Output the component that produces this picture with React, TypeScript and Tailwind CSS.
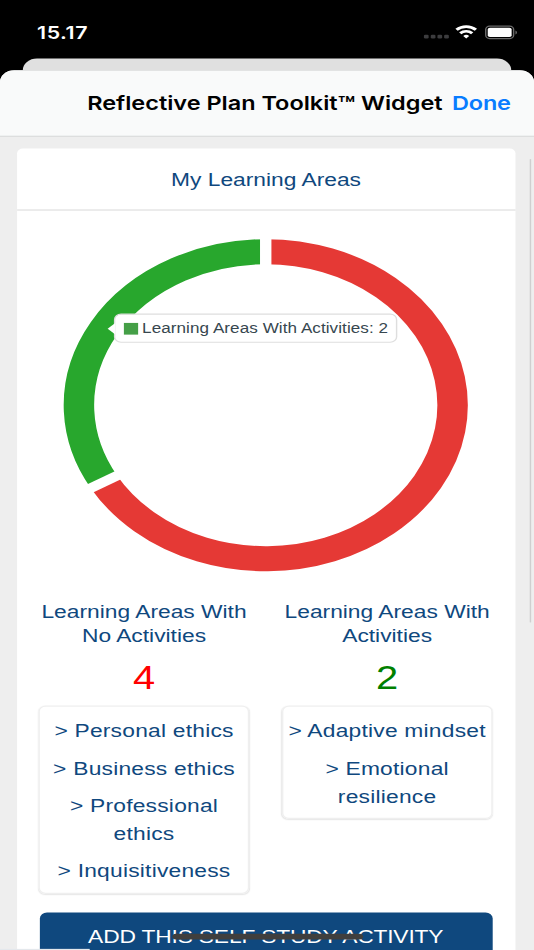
import React from 'react';

interface Area {
    title: string[];
    count: number;
    countClass: string;
    items: string[];
}

const AREAS: Area[] = [
    {
        title: ['Learning Areas With', 'No Activities'],
        count: 4,
        countClass: 'text-[#ff0000]',
        items: ['Personal ethics', 'Business ethics', 'Professional ethics', 'Inquisitiveness'],
    },
    {
        title: ['Learning Areas With', 'Activities'],
        count: 2,
        countClass: 'text-[#008000]',
        items: ['Adaptive mindset', 'Emotional resilience'],
    },
];

const StatusBar: React.FC = () => (
    <div className="flex h-[50.4px] shrink-0 items-start justify-between pl-[26px] pr-[12.3px] pt-[19px] font-['Inter',sans-serif] text-white">
        <span className="text-[15px] font-semibold leading-[18px] tracking-[0.4px]">15.17</span>
        <svg className="mt-[2px] h-[14px] w-[68px]" viewBox="0 0 68 14">
            <g fill="#3c3c3e">
                <rect x="2.7" y="8.6" width="3.3" height="3.3" rx="1" />
                <rect x="7.5" y="8.6" width="3.3" height="3.3" rx="1" />
                <rect x="12.2" y="8.6" width="3.3" height="3.3" rx="1" />
                <rect x="16.9" y="8.6" width="3.3" height="3.3" rx="1" />
            </g>
            <g fill="none" stroke="#fff" strokeWidth="2.3">
                <path d="M25.6 4.4a9.9 9.9 0 0 1 13.6 0" />
                <path d="M28.2 7.4a6.1 6.1 0 0 1 8.4 0" />
            </g>
            <path d="M30.3 9.7a3.1 3.1 0 0 1 4.2 0L32.4 12z" fill="#fff" />
            <rect x="46.1" y="1.4" width="19.6" height="10.6" rx="2.8" fill="none" stroke="#6a6a6a" />
            <rect x="47.5" y="2.8" width="16.8" height="7.8" rx="1.5" fill="#fff" />
            <path d="M67 5v3.4q1-.5 1-1.7T67 5z" fill="#7a7a7a" />
        </svg>
    </div>
);

const Tooltip: React.FC = () => (
    <div className="absolute left-[67.8px] top-[87.9px] flex h-[24.9px] w-[199.4px] items-center rounded-[5px] border border-[#dedede] bg-white pl-[6.2px]">
        <svg className="absolute -left-[5.5px] top-[6.5px] h-[10px] w-[6px]" viewBox="0 0 6 10">
            <path d="M6 0L0.6 5L6 10z" fill="#fff" />
        </svg>
        <span className="h-[10px] w-[10px] bg-[#459f47]" />
        <span className="ml-[2.8px] whitespace-nowrap text-[12px] tracking-[0.04px] text-[#37474f]">
            Learning Areas With Activities: 2
        </span>
    </div>
);

// 2 of 6 areas have activities, so the green arc covers the last 120 degrees
const DonutChart: React.FC = () => (
    <div className="relative h-[335px]">
        <svg className="h-[335px] w-[350px] max-w-none" viewBox="0 -0.7 350 335">
            <g fill="none" strokeWidth="21.4">
                <path d="M174.6 34.4A131.2 131.2 0 1 1 61 231.2" stroke="#e53935" />
                <path d="M61 231.2A131.2 131.2 0 0 1 174.6 34.4" stroke="#28a72d" />
            </g>
            <g stroke="#fff" strokeWidth="8">
                <path d="M174.6 165.6V15" />
                <path d="M174.6 165.6L44.7 240.6" />
            </g>
        </svg>
        <Tooltip />
    </div>
);

const AreaColumn: React.FC<{ area: Area }> = ({ area }) => (
    <div className="flex w-[147.7px] flex-col text-center">
        <h3 className="text-[16px] leading-[21px]">
            {area.title.map((line) => (
                <span key={line} className="block whitespace-nowrap">{line}</span>
            ))}
        </h3>
        <p className={`mt-[9.8px] text-[28px] leading-[32px] ${area.countClass}`}>{area.count}</p>
        <ul className="mt-[7.6px] rounded-[5px] border border-[#efefef] pb-[2.4px] pt-[4.4px] shadow-[0_0.5px_1px_rgba(0,0,0,0.1)]">
            {area.items.map((item) => (
                <li key={item} className="px-[2px] py-[4px] text-[16px] leading-[24px] tracking-[0.16px]">
                    {`> ${item}`}
                </li>
            ))}
        </ul>
    </div>
);

const App: React.FC = () => (
    <div className="h-[950px] w-[534px] overflow-hidden bg-black">
        {/* 375x812 phone screen stretched over the window */}
        <div className="relative flex h-[812px] w-[375px] origin-top-left scale-x-[1.424] scale-y-[1.17] flex-col overflow-hidden bg-black font-['Liberation_Sans',sans-serif] text-[#0f487e]">
            <StatusBar />
            <div className="mx-[16.4px] h-[9.8px] shrink-0 rounded-t-[10px] bg-[#e0e0e0]" />
            <div className="flex min-h-0 flex-1 flex-col overflow-hidden rounded-t-[10px] bg-[#eeeeee]">
                <header className="flex h-[56.6px] shrink-0 items-center justify-end border-b border-[#d9dadb] bg-[#f9fafa] pr-[16.3px] pt-[1.2px] font-['Inter',sans-serif] text-[16.5px] font-semibold">
                    <h1 className="flex items-baseline whitespace-nowrap tracking-[-0.01px] text-black">
                        Reflective Plan Toolkit
                        <span className="relative top-[2.6px] text-[20px] leading-[16px]">™</span>
                        <span className="ml-[3.8px]">Widget</span>
                    </h1>
                    <button className="ml-[6.7px] tracking-[-0.15px] text-[#087cff]">Done</button>
                </header>
                <div className="flex min-h-0 flex-1 pt-[9.8px]">
                    <main className="ml-[12px] flex w-[349.6px] flex-col rounded-t-[4px] bg-white">
                        <h2 className="h-[53.7px] shrink-0 border-b border-[#dedede] text-center text-[16px] leading-[53px]">
                            My Learning Areas
                        </h2>
                        <DonutChart />
                        <div className="-mt-[3.3px] flex justify-between pl-[15.3px] pr-[15.9px]">
                            {AREAS.map((area) => (
                                <div key={area.count}>
                                    <AreaColumn area={area} />
                                </div>
                            ))}
                        </div>
                        <button className="ml-[15.6px] mr-[16px] mt-[15.8px] h-[42px] shrink-0 rounded-[5px] bg-[#0f487e] text-[16px] tracking-[-0.12px] text-white">
                            ADD THIS SELF STUDY ACTIVITY
                        </button>
                    </main>
                    <div className="ml-[10px] mt-[9px] h-[396px] w-[0.8px] bg-[#cfcfcf]" />
                </div>
            </div>
            <div className="absolute left-[120.8px] top-[798.2px] h-[5px] w-[134px] rounded-full bg-[#403f3e]" />
            <div className="absolute bottom-0 left-0 h-[0.9px] w-[63px] bg-[#e4e8ec]" />
        </div>
    </div>
);

export default App;
